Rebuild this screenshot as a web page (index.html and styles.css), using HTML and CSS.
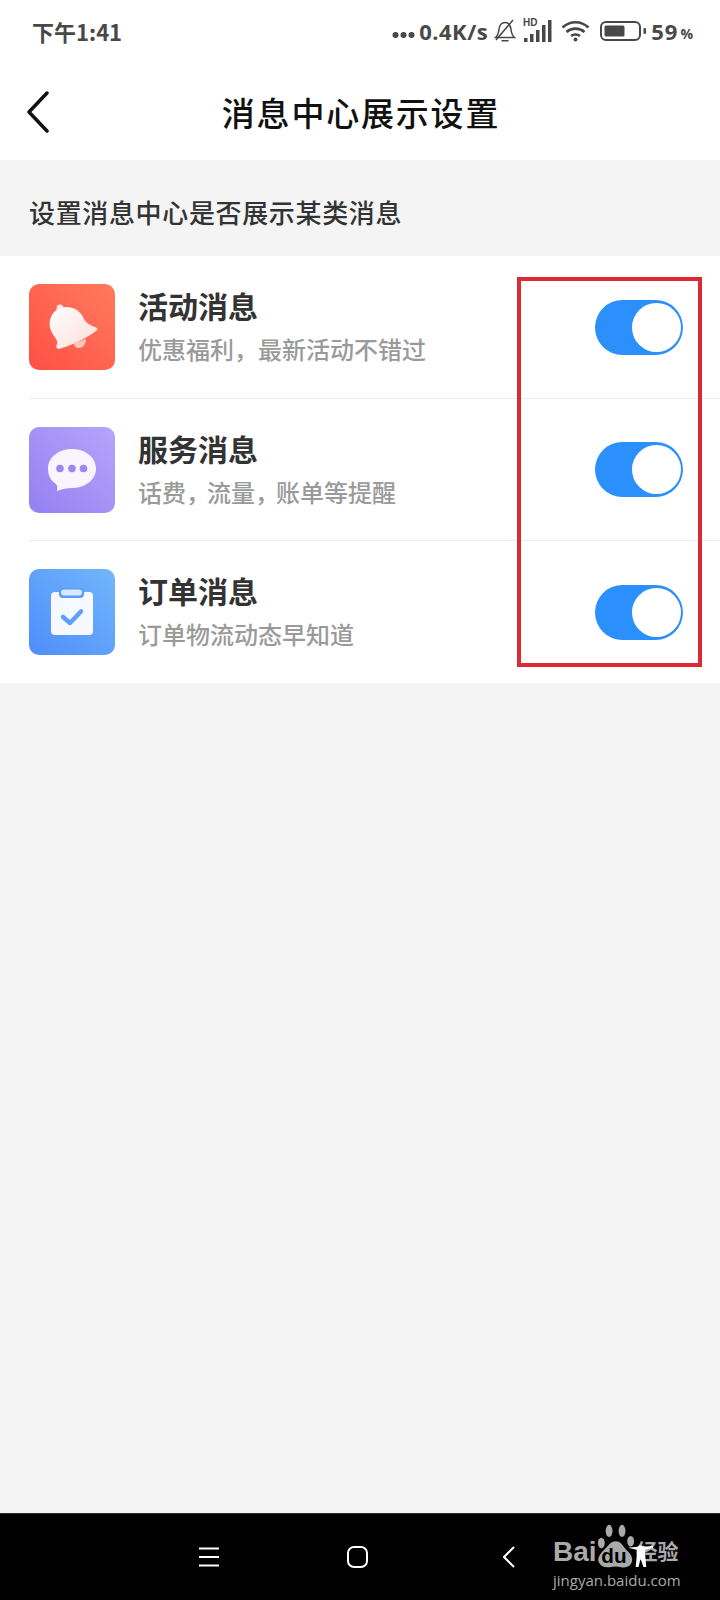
FILE: index.html
```html
<!DOCTYPE html>
<html lang="zh-CN">
<head>
  <meta charset="UTF-8" />
  <meta name="viewport" content="width=device-width, initial-scale=1.0" />
  <title>消息中心展示设置</title>
  <link rel="stylesheet" href="styles.css">
</head>
<body>
  <div class="phone">
    <div class="status-bar">
      <span class="time">下午1:41</span>
      <div class="status-right">
        <svg class="st-dots" width="23" height="8" viewBox="0 0 23 8"><circle cx="3.5" cy="4" r="3" /><circle cx="11.5" cy="4" r="3" /><circle cx="19.5" cy="4" r="3" /></svg>
        <span class="speed">0.4K/s</span>
        <svg class="st-bell" width="22" height="24" viewBox="0 0 22 24"><path d="M1.500 18.500c2.500-2 3-4 3.500-8 .5-4.500 3-7 6-7s5.500 2.500 6 7c.5 4 1 6 3.500 8zM7.500 21.800h7M2 21L19 1" /></svg>
        <svg class="st-signal" width="29" height="28" viewBox="0 0 29 28"><text x="0" y="9" class="st-hd">HD</text><rect x="1" y="21" width="3.500" height="4" /><rect x="7" y="17" width="3.500" height="8" /><rect x="13" y="13" width="3.500" height="12" /><rect x="19" y="8" width="3.500" height="17" /><rect x="25" y="3" width="3.500" height="22" /></svg>
        <svg class="st-wifi" width="29" height="22" viewBox="0 0 29 22"><path d="M1.500 7.500c7.500-7 18.500-7 26 0M5.500 12c5-4.500 13-4.500 18 0M10 16c2.500-2 6.500-2 9 0" /><circle cx="14.500" cy="19.500" r="2" /></svg>
        <svg class="st-battery" width="46" height="20" viewBox="0 0 46 20"><rect x="1" y="1" width="39" height="18" rx="5" class="batt-case" /><rect x="4.500" y="4.500" width="20" height="11" rx="1.500" /><rect x="43.500" y="7" width="2.500" height="6" rx="1" /></svg>
        <span class="batt-num">59</span>
        <span class="batt-pct">%</span>
      </div>
    </div>

    <header class="top-bar">
      <svg class="back" width="24" height="42" viewBox="0 0 24 42"><path d="M21 2L3 21l18 19" /></svg>
      <h1>消息中心展示设置</h1>
    </header>

    <p class="section-tip">设置消息中心是否展示某类消息</p>

    <div class="list">
      <div class="row">
        <svg class="app-icon" width="86" height="86" viewBox="0 0 86 86">
          <defs>
            <linearGradient id="redBg" x1="0" y1="1" x2="1" y2="0"><stop offset="0" stop-color="#ff4f46" /><stop offset="1" stop-color="#ff7b5d" /></linearGradient>
            <linearGradient id="whiteFade" x1="0" y1="0" x2="1" y2="1"><stop offset="0" stop-color="#fff" /><stop offset="1" stop-color="#ffdcd6" /></linearGradient>
          </defs>
          <rect width="86" height="86" rx="10" fill="url(#redBg)" />
          <circle cx="31" cy="24" r="3.500" fill="#ffe9e4" />
          <path d="M30 65C27 65 27 62 28 60C29 57 27 55 25 52C21 46 19 40 22 33C25 26 31 23 37 23C45 23 51 27 54 33C56 38 60 41 66 43C69 44 69 46 67 47C56 55 43 61 30 65Z" fill="url(#whiteFade)" />
          <path d="M45 59L57 55C57 60 54 64 50 64C47 64 45 62 45 59Z" fill="#ffc5ba" />
        </svg>
        <div class="row-text">
          <div class="row-title">活动消息</div>
          <div class="row-sub">优惠福利，最新活动不错过</div>
        </div>
        <div class="toggle"><span class="knob"></span></div>
      </div>

      <div class="row">
        <svg class="app-icon" width="86" height="86" viewBox="0 0 86 86">
          <defs>
            <linearGradient id="purpleBg" x1="0" y1="1" x2="1" y2="0"><stop offset="0" stop-color="#9380f2" /><stop offset="1" stop-color="#b6a5fb" /></linearGradient>
          </defs>
          <rect width="86" height="86" rx="10" fill="url(#purpleBg)" />
          <path d="M43 22c13.500 0 24 8.500 24 19.500S56.500 61 43 61c-5 0-10 1-15 3 .5-3 .5-5-1-7-6-4-8-9.500-8-15.500 0-11 10.500-19.500 24-19.500z" fill="#f8f5ff" />
          <circle cx="31" cy="41.500" r="3.800" fill="#9a87f2" />
          <circle cx="43" cy="41.500" r="3.800" fill="#9a87f2" />
          <circle cx="54.500" cy="41.500" r="3.800" fill="#9a87f2" />
        </svg>
        <div class="row-text">
          <div class="row-title">服务消息</div>
          <div class="row-sub">话费<span class="comma">，</span>流量<span class="comma">，</span>账单等提醒</div>
        </div>
        <div class="toggle"><span class="knob"></span></div>
      </div>

      <div class="row">
        <svg class="app-icon" width="86" height="86" viewBox="0 0 86 86">
          <defs>
            <linearGradient id="blueBg" x1="0" y1="1" x2="1" y2="0"><stop offset="0" stop-color="#4f8dfb" /><stop offset="1" stop-color="#72b6fb" /></linearGradient>
          </defs>
          <rect width="86" height="86" rx="10" fill="url(#blueBg)" />
          <rect x="22" y="23" width="42" height="43" rx="4" fill="#f6f9ff" />
          <rect x="30" y="19" width="25" height="10" rx="4" fill="#5b9dfa" />
          <rect x="32" y="20.500" width="21" height="6" rx="3" fill="#d8e9fe" />
          <path d="M34 48l7 6 11-11.500" fill="none" stroke="#5f9ffa" stroke-width="4.500" stroke-linecap="round" stroke-linejoin="round" />
        </svg>
        <div class="row-text">
          <div class="row-title">订单消息</div>
          <div class="row-sub">订单物流动态早知道</div>
        </div>
        <div class="toggle"><span class="knob"></span></div>
      </div>

      <div class="red-frame"></div>
    </div>

    <div class="filler"></div>

    <nav class="nav-bar">
      <svg class="nav-icon" width="20" height="20" viewBox="0 0 20 20"><path d="M0 1.500h20M0 10h20M0 18.500h20" /></svg>
      <svg class="nav-icon" width="21" height="22" viewBox="0 0 21 22"><rect x="1" y="1" width="19" height="20" rx="6" /></svg>
      <svg class="nav-icon" width="12" height="22" viewBox="0 0 12 22"><path d="M11 1L1 11l10 10" /></svg>

      <div class="watermark">
        <div class="wm-top">
          <span class="wm-bai">Bai</span>
          <svg class="wm-paw" width="38" height="44" viewBox="0 0 44 51">
            <ellipse cx="5" cy="22" rx="4" ry="6" /><ellipse cx="14" cy="8" rx="4" ry="7" /><ellipse cx="29" cy="8" rx="4" ry="7" /><ellipse cx="39" cy="20" rx="4" ry="6" />
            <path d="M22 20c6 0 8 6 12 10 6 5 8 10 6 15-2 5-7 6-12 5-4-1-9-1-13 0-6 1-11-1-13-6-2-5 2-10 6-14 5-4 7-10 14-10z" />
            <text x="5" y="45" class="wm-du">du</text>
          </svg>
          <span class="wm-jy">经验</span>
        </div>
        <div class="wm-url">jingyan.baidu.com</div>
        <svg class="wm-figure" width="25" height="25" viewBox="0 0 26 24"><path d="M0 4l10-1c1-2 5-2 6 0l10-1v2l-8 2v7l1 11h-3l-3-9-2 9H8l1-11V6z" /></svg>
      </div>
    </nav>
  </div>
</body>
</html>
```

FILE: styles.css
```css
* {
  box-sizing: border-box;
}

body {
  margin: 0;
  padding: 0;
  font-family: "Noto Sans CJK SC", "Noto Sans", sans-serif;
  background: #f4f4f4;
}

.phone {
  width: 720px;
  height: 1600px;
  display: flex;
  flex-direction: column;
}

/* status bar */
.status-bar {
  height: 64px;
  background: #fff;
  display: flex;
  align-items: center;
  justify-content: space-between;
  padding: 0 27px 2px 32px;
  color: #484848;
}

.time {
  font-size: 22px;
  font-weight: 700;
}

.status-right {
  display: flex;
  align-items: center;
}

.status-right svg {
  fill: #484848;
}

.st-dots {
  margin: 8px 4px 0 0;
}

.speed {
  font-family: "Open Sans", sans-serif;
  font-size: 22px;
  font-weight: 700;
  letter-spacing: 0.5px;
  margin-right: 6px;
}

.st-bell {
  fill: none !important;
  stroke: #484848;
  stroke-width: 1.500;
  margin-right: 7px;
}

.st-hd {
  font-family: "Liberation Sans", sans-serif;
  font-size: 10px;
  font-weight: 700;
}

.st-signal {
  margin-right: 9px;
}

.st-wifi {
  margin-right: 10px;
}

.st-wifi path {
  fill: none;
  stroke: #484848;
  stroke-width: 2.600;
}

.batt-case {
  fill: none;
  stroke: #484848;
  stroke-width: 2;
}

.st-battery {
  margin-right: 5px;
}

.batt-num {
  font-family: "Open Sans", sans-serif;
  font-size: 22px;
  font-weight: 700;
  letter-spacing: 1px;
  margin-right: 2px;
}

.batt-pct {
  font-family: "Open Sans", sans-serif;
  font-size: 14px;
  font-weight: 700;
  margin-top: 5px;
}

/* title bar */
.top-bar {
  height: 96px;
  background: #fff;
  position: relative;
  display: flex;
  align-items: center;
  justify-content: center;
  padding-left: 2px;
}

.back {
  position: absolute;
  left: 26px;
  top: 27px;
  fill: none;
  stroke: #111;
  stroke-width: 3.500;
  stroke-linecap: round;
  stroke-linejoin: round;
}

h1 {
  margin: 0;
  font-size: 33px;
  font-weight: 500;
  letter-spacing: 1.800px;
  color: #111;
}

.section-tip {
  margin: 0;
  height: 96px;
  padding: 6px 0 0 29px;
  display: flex;
  align-items: center;
  font-size: 26px;
  font-weight: 500;
  letter-spacing: 0.650px;
  color: #333;
}

/* rows */
.list {
  background: #fff;
  position: relative;
}

.row {
  height: 142px;
  margin-left: 29px;
  padding-right: 37px;
  display: flex;
  align-items: center;
  border-bottom: 1px solid #ececec;
}

.row:first-child {
  height: 143px;
}

.row:nth-child(3) {
  border-bottom: none;
}

.app-icon {
  flex: none;
  margin-right: 23px;
}

.row-text {
  flex: 1;
}

.row-title {
  font-size: 30px;
  font-weight: 700;
  line-height: 44px;
  color: #333;
}

.row-sub {
  font-size: 24px;
  font-weight: 500;
  line-height: 44px;
  color: #9a9a9a;
}

.comma {
  margin-right: -3px;
}

.toggle {
  width: 88px;
  height: 55px;
  border-radius: 28px;
  background: #2b90fb;
  padding: 3px 2px;
  display: flex;
  justify-content: flex-end;
}

.knob {
  width: 49px;
  height: 49px;
  border-radius: 50%;
  background: #fff;
}

.red-frame {
  position: absolute;
  left: 517px;
  top: 21px;
  width: 185px;
  height: 390px;
  border: 4px solid #dc2a35;
  pointer-events: none;
}

.filler {
  flex: 1;
}

/* bottom nav + watermark */
.nav-bar {
  height: 87px;
  background: #000;
  position: relative;
  padding: 0 0 0 199px;
  display: flex;
  align-items: center;
  border-top: 1px solid #2a2a2a;
}

.nav-icon {
  fill: none;
  stroke: #fff;
  stroke-width: 2;
  margin-right: 128px;
}

.nav-icon:nth-child(2) {
  margin-right: 135px;
}

.watermark {
  position: absolute;
  left: 553px;
  top: 10px;
  color: #aaa;
}

.wm-top {
  display: flex;
  align-items: flex-end;
  height: 44px;
}

.wm-bai {
  font-family: "Liberation Sans", sans-serif;
  font-size: 28px;
  font-weight: 700;
  line-height: 32px;
}

.wm-paw {
  fill: #aaa;
}

.wm-du {
  font-family: "Liberation Sans", sans-serif;
  font-size: 24px;
  font-weight: 700;
  fill: #000;
}

.wm-jy {
  font-size: 21px;
  font-weight: 700;
  line-height: 32px;
  margin: 0 0 2px 2px;
}

.wm-url {
  font-family: "Open Sans", sans-serif;
  font-size: 15px;
  line-height: 22px;
  margin-top: 1px;
}

.wm-figure {
  position: absolute;
  left: 75px;
  top: 19px;
  fill: #fff;
}
```
